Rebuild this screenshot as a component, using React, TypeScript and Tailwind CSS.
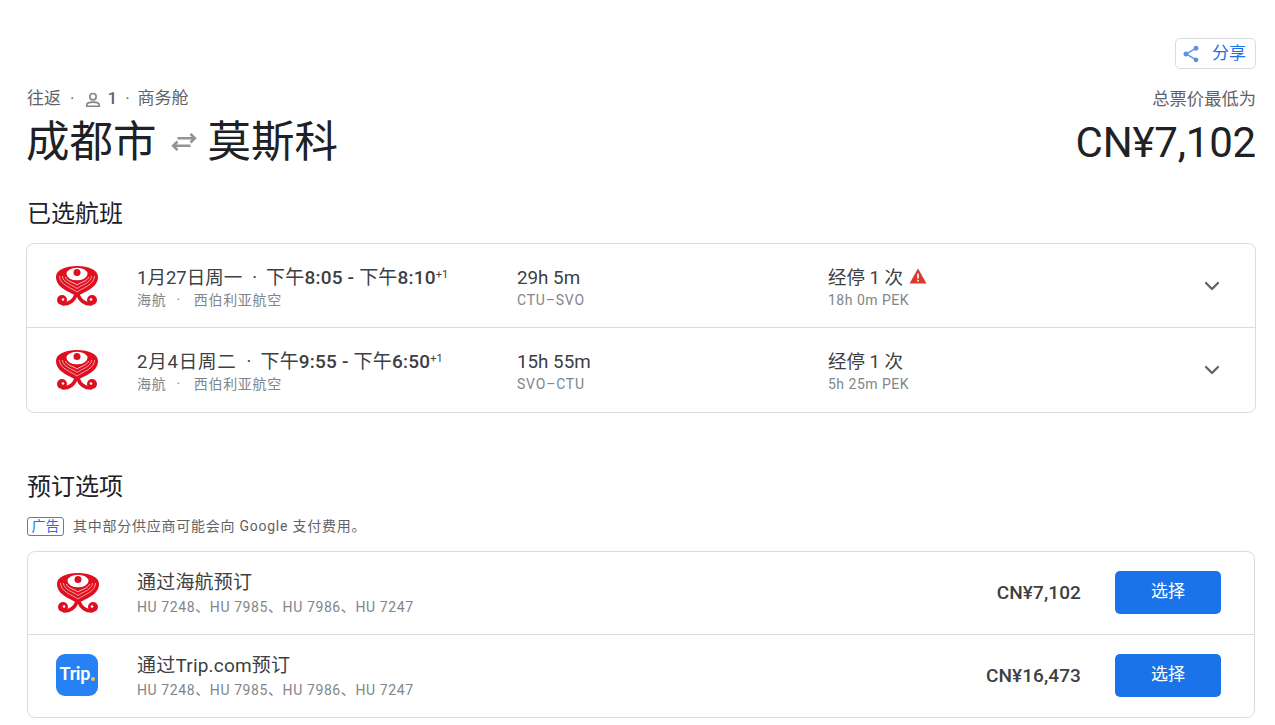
import { ChevronDown } from "lucide-react";

const font = { fontFamily: 'Roboto, "Noto Sans CJK SC", sans-serif' };

function HainanLogo() {
  return (
    <svg width="44" height="40" viewBox="0 0 44 40" className="shrink-0">
      {/* heart body with its stripes */}
      <path d="M22 31 C17 26 1 23 1 11 C1 4 10 0 22 0 C34 0 43 4 43 11 C43 23 27 26 22 31Z" fill="#df0f20" />
      <path d="M4.500 10 C4.500 19 17 22 22 26 C27 22 39.500 19 39.500 10" fill="none" stroke="#f7b3b8" strokeWidth="0.900" />
      <path d="M7.500 10 C7.500 17 18 19 22 22.500 C26 19 36.500 17 36.500 10" fill="none" stroke="#f7b3b8" strokeWidth="0.900" />
      <path d="M10.500 11 C11 15 19 16.500 22 19 C25 16.500 33 15 33.500 11" fill="none" stroke="#fbd5d8" strokeWidth="0.900" />
      <ellipse cx="22" cy="8" rx="10.500" ry="6.300" fill="#fff" />
      <circle cx="22" cy="6.500" r="3.500" fill="#df0f20" />
      {/* scrolls under the heart */}
      <path d="M21 29 C19 34 15 38 8 38 M23 29 C25 34 29 38 36 38" fill="none" stroke="#df0f20" strokeWidth="3.600" strokeLinecap="round" />
      <circle cx="7" cy="34" r="5" fill="#df0f20" />
      <circle cx="37" cy="34" r="5" fill="#df0f20" />
      <circle cx="8" cy="33.500" r="1.300" fill="#fff" />
      <circle cx="36" cy="33.500" r="1.300" fill="#fff" />
    </svg>
  );
}

function TripLogo() {
  return (
    <div className="w-[42px] h-[42px] mb-[3px] pb-[3px] rounded-[9px] bg-[#2681f5] flex items-center justify-center shrink-0 text-white text-[18px] font-semibold tracking-[-0.3px]">
      Trip<span className="w-[3.500px] h-[3.500px] rounded-full bg-[#f8c53a] self-end mb-[12px] ml-[1px]"></span>
    </div>
  );
}

function FlightRow({ date, dateClass, times, duration, route, stops, layover, warn, border }: {
  date: string; dateClass?: string; times: string; duration: string; route: string; stops: string; layover: string; warn?: boolean; border?: boolean;
}) {
  return (
    <div className={`flex items-center h-[84px] ${border ? "border-b border-[#dadce0] pt-px" : ""}`}>
      <div className="w-[110px] pl-[28px] shrink-0"><HainanLogo /></div>
      <div className="w-[380px] shrink-0 mt-[3px]">
        <div className="text-[18.500px] leading-[24px] text-[#3c4043] whitespace-nowrap">
          <span className={dateClass}>{date}</span><span className="ml-[10px] mr-[9px]">·</span>
          <span className="text-[19px] tracking-[0.2px]">
            {times.split(/(下午)/).map((part, i) => (
              <span key={i} className={part === "下午" ? "" : "font-medium"}>{part}</span>
            ))}
          </span>
          <sup className="text-[11px]">+1</sup>
        </div>
        <div className="text-[14px] leading-[20px] tracking-[0.7px] text-[#80868b] whitespace-nowrap">海航<span className="ml-[10px] mr-[13px]">·</span>西伯利亚航空</div>
      </div>
      <div className="w-[311px] shrink-0 mt-[3px]">
        <div className="text-[18.800px] leading-[24px] text-[#3c4043]">{duration}</div>
        <div className="text-[14px] leading-[20px] tracking-[0.8px] text-[#80868b]">{route}</div>
      </div>
      <div className="flex-1 mt-[3px]">
        <div className="flex items-center gap-[6px] text-[18.500px] leading-[24px] text-[#3c4043]">
          {stops}
          {warn && (
            <svg width="18" height="16" viewBox="0 0 18 16" className="mb-[3px]">
              <path d="M9 0.500 L17.500 15.500 L0.500 15.500Z" fill="#d93a2b" />
              <rect x="8.200" y="5.500" width="1.600" height="5" fill="#fff" />
              <rect x="8.200" y="11.800" width="1.600" height="1.700" fill="#fff" />
            </svg>
          )}
        </div>
        <div className="text-[14px] leading-[20px] tracking-[0.5px] text-[#80868b]">{layover}</div>
      </div>
      <ChevronDown className="w-[24px] h-[24px] mr-[31px] text-[#5f6368]" strokeWidth={2.300} />
    </div>
  );
}

function BookingRow({ logo, title, price, border }: { logo: React.ReactNode; title: string; price: string; border?: boolean }) {
  return (
    <div className={`flex items-center ${border ? "h-[83px] border-b border-[#dadce0]" : "h-[82px]"}`}>
      <div className="w-[109px] pl-[28px] shrink-0">{logo}</div>
      <div className="flex-1">
        <div className="text-[19px] leading-[26px] tracking-[0.2px] text-[#3c4043]">{title}</div>
        <div className="mt-[1px] text-[14px] leading-[20px] tracking-[0.6px] text-[#80868b]">HU 7248、HU 7985、HU 7986、HU 7247</div>
      </div>
      <div className="text-[19px] font-medium tracking-[0.1px] text-[#3c4043] mr-[34px]">{price}</div>
      <button className="w-[106px] h-[43px] mb-[2px] rounded-[5px] bg-[#1a73e8] text-white text-[17px] mr-[33px]">选择</button>
    </div>
  );
}

export default function App() {
  return (
    <div className="w-[1275px] h-[725px] overflow-hidden bg-white pl-[26px] pr-[19px] pt-[38px]" style={font}>
      <div className="flex justify-end">
        <button className="w-[81px] h-[31px] border border-[#dadce0] rounded-[5px] flex items-center pl-[5px] gap-[11px] text-[#1a73e8] text-[17px]">
          <svg width="20" height="20" viewBox="0 0 24 24" fill="#5f8fe0">
            <path d="M18 16.100c-.76 0-1.440.300-1.960.770L8.910 12.700c.050-.230.090-.460.090-.700s-.040-.470-.090-.700l7.050-4.110c.540.500 1.250.810 2.040.810 1.660 0 3-1.340 3-3s-1.340-3-3-3-3 1.340-3 3c0 .240.040.470.090.700L8.040 9.810C7.500 9.310 6.790 9 6 9c-1.660 0-3 1.340-3 3s1.340 3 3 3c.790 0 1.500-.310 2.040-.810l7.120 4.160c-.050.210-.080.430-.080.650 0 1.610 1.310 2.920 2.920 2.920s2.920-1.310 2.920-2.920-1.310-2.900-2.920-2.900z" />
          </svg>
          分享
        </button>
      </div>

      <div className="flex justify-between items-start mt-[19px] pl-px">
        <div>
          <div className="flex items-center h-[22px] text-[17px] text-[#5f6368] whitespace-nowrap">
            往返<span className="ml-[9px] mr-[9px]">·</span>
            <svg width="20" height="20" viewBox="0 0 24 24" fill="none" stroke="#80868b" strokeWidth="2" className="mr-[4px] mt-[2px]">
              <circle cx="12" cy="8" r="3.800" />
              <path d="M4.500 19.500v-1.500c0-2.500 4.500-3.500 7.500-3.500s7.500 1 7.500 3.500v1.500z" />
            </svg>
            <span className="font-medium">1</span><span className="ml-[8px] mr-[8px]">·</span>商务舱
          </div>
          <div className="flex items-center h-[58px] mt-[4px] text-[43.500px] text-[#202124] -ml-px">
            成都市
            <svg width="26" height="20" viewBox="0 0 24 18" fill="none" stroke="#8f9499" strokeWidth="2.400" className="ml-[14px] mr-[11px] mb-[2px]">
              <path d="M6 5.500H22M18 1.500l4 4-4 4M2 12.500H18M6 8.500l-4 4 4 4" />
            </svg>
            莫斯科
          </div>
        </div>
        <div className="text-right">
          <div className="h-[22px] text-[17.300px] leading-[22px] text-[#5f6368]">总票价最低为</div>
          <div className="h-[58px] mt-[4px] text-[42px] leading-[58px] tracking-[-0.2px] text-[#202124]">CN¥7,102</div>
        </div>
      </div>

      <h2 className="mt-[26px] ml-px text-[24px] leading-[32px] text-[#202124]">已选航班</h2>
      <div className="mt-[13px] border border-[#dadce0] rounded-[8px]">
        <FlightRow date="1月27日周一" times="下午8:05 - 下午8:10" duration="29h 5m" route="CTU–SVO" stops="经停 1 次" layover="18h 0m PEK" warn border />
        <FlightRow date="2月4日周二" dateClass="tracking-[0.8px]" times="下午9:55 - 下午6:50" duration="15h 55m" route="SVO–CTU" stops="经停 1 次" layover="5h 25m PEK" />
      </div>

      <h2 className="mt-[58px] ml-px text-[24px] leading-[32px] text-[#202124]">预订选项</h2>
      <div className="mt-[13px] ml-px flex items-center text-[14px] text-[#5f6368] tracking-[0.75px]">
        <span className="w-[37px] h-[19px] border border-[#4285c8] rounded-[3px] text-[#1a73e8] tracking-normal flex items-center justify-center mr-[9px]">广告</span>
        其中部分供应商可能会向 Google 支付费用。
      </div>
      <div className="mt-[14px] mx-px border border-[#dadce0] rounded-[8px]">
        <BookingRow logo={<HainanLogo />} title="通过海航预订" price="CN¥7,102" border />
        <BookingRow logo={<TripLogo />} title="通过Trip.com预订" price="CN¥16,473" />
      </div>
    </div>
  );
}
